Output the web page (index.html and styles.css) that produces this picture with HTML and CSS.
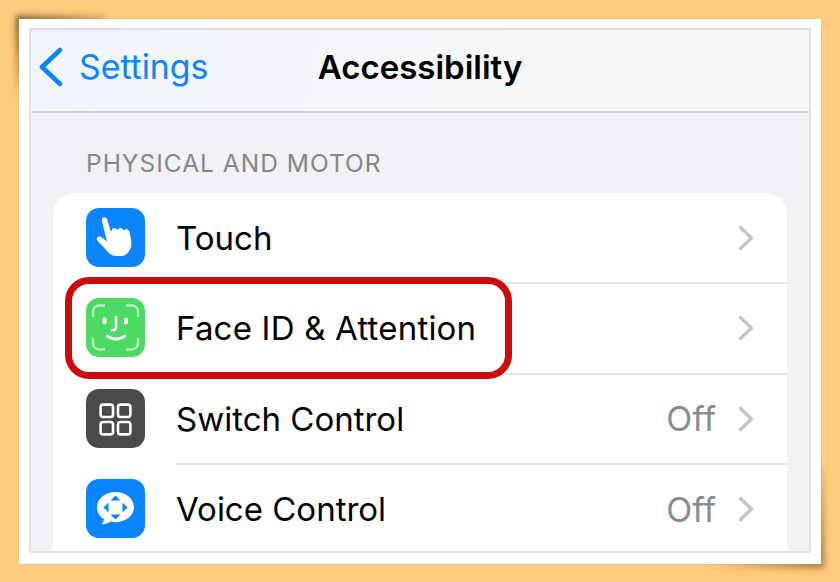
FILE: index.html
```html
<!DOCTYPE html>
<html lang="en">
<head>
<meta charset="utf-8">
<title>Accessibility</title>
<link rel="stylesheet" href="styles.css">
</head>
<body>
<main class="card">
  <div class="screen">
    <header class="nav">
      <a class="back">
        <svg class="back-icon" width="26" height="40" viewBox="0 0 26 40"><path d="M23 3 L5 20 L23 37" fill="none" stroke="#0a84ff" stroke-width="4.6" stroke-linecap="round" stroke-linejoin="round"/></svg>
        <span>Settings</span>
      </a>
      <h1 class="title">Accessibility</h1>
    </header>
    <section class="content">
      <h2 class="section-label">PHYSICAL AND MOTOR</h2>
      <ul class="list">
        <li class="row">
          <span class="icon icon-blue">
            <svg width="59" height="59" viewBox="0 0 59 59"><path d="M16 13.500C15.400 11 16.500 9.600 18 9.300 19.600 9 20.800 10 21.300 11.700L24.600 23 25.800 22.600C26 20.800 27.200 20 28.500 20 29.900 20 30.800 20.800 31.200 22L32 21.800C32.500 20.400 33.600 19.800 34.800 19.900 36.200 20 37 21 37.300 22.400L38.200 22.200C38.900 21.200 39.900 20.900 41 21.200 42.600 21.600 43.400 22.800 43.700 24.400L45.200 33C46 37 44.500 44 38.500 47.500 34 48.500 28 48.300 24.500 46.500 20 42 16 37.500 12 33.500 10.400 31.800 10.400 30 11.500 29 12.600 28 14.300 28.300 15.800 29.500L21 33.500Z" fill="#fff"/></svg>
          </span>
          <span class="label">Touch</span>
          <svg class="chev" width="16" height="26" viewBox="0 0 16 26"><path d="M2.500 2.500 L13.500 13 L2.500 23.500" fill="none" stroke="#c5c5c8" stroke-width="3.400" stroke-linecap="round" stroke-linejoin="round"/></svg>
        </li>
        <li class="row">
          <span class="icon icon-green">
            <svg width="59" height="59" viewBox="0 0 59 59"><g fill="none" stroke="#fff" stroke-linecap="round"><path d="M7 18v-4.500a6 6 0 0 1 6-6h5M41 7.500h5a6 6 0 0 1 6 6V18M52 41v4.500a6 6 0 0 1-6 6h-5M18 51.500h-5a6 6 0 0 1-6-6V41" stroke-width="2.400" opacity=".6"/><path d="M18.500 21.500v3M40 21.500v3" stroke-width="4"/><path d="M30 19v10.500c0 2-1 2.800-4 2.800" stroke-width="2.500"/><path d="M21.500 38c4.500 4 12.500 4 17 0" stroke-width="3"/></g></svg>
          </span>
          <span class="label label-wide">Face ID &amp; Attention</span>
          <svg class="chev" width="16" height="26" viewBox="0 0 16 26"><path d="M2.500 2.500 L13.500 13 L2.500 23.500" fill="none" stroke="#c5c5c8" stroke-width="3.400" stroke-linecap="round" stroke-linejoin="round"/></svg>
        </li>
        <li class="row">
          <span class="icon icon-gray">
            <svg width="59" height="59" viewBox="0 0 59 59"><g fill="none" stroke="#fff" stroke-width="2.600"><rect x="14.600" y="15.600" width="12.400" height="12.400" rx="2.500"/><rect x="32" y="15.600" width="12.400" height="12.400" rx="2.500"/><rect x="14.600" y="33" width="12.400" height="12.400" rx="2.500"/><rect x="32" y="33" width="12.400" height="12.400" rx="2.500"/></g></svg>
          </span>
          <span class="label">Switch Control</span>
          <span class="value">Off</span>
          <svg class="chev" width="16" height="26" viewBox="0 0 16 26"><path d="M2.500 2.500 L13.500 13 L2.500 23.500" fill="none" stroke="#c5c5c8" stroke-width="3.400" stroke-linecap="round" stroke-linejoin="round"/></svg>
        </li>
        <li class="row">
          <span class="icon icon-blue">
            <svg width="59" height="59" viewBox="0 0 59 59"><path d="M29.500 13C19.300 13 11 19.800 11 28.300 11 33.300 13.600 37.500 18 40.300 17.700 42.100 16.900 43.700 15.600 45.200 18.900 45.400 22.200 44.400 24.700 42.600 26.300 43 27.900 43.200 29.500 43.200 39.700 43.200 48 36.700 48 28.300 48 19.800 39.700 13 29.500 13Z" fill="#fff"/><path d="M29.500 16.500l5 5h-10zM29.500 40.500l-5-5h10zM17.500 28.500l5-5v10zM41.500 28.500l-5-5v10z" fill="#0a84ff"/></svg>
          </span>
          <span class="label">Voice Control</span>
          <span class="value">Off</span>
          <svg class="chev" width="16" height="26" viewBox="0 0 16 26"><path d="M2.500 2.500 L13.500 13 L2.500 23.500" fill="none" stroke="#c5c5c8" stroke-width="3.400" stroke-linecap="round" stroke-linejoin="round"/></svg>
        </li>
      </ul>
    </section>
    <div class="highlight"></div>
  </div>
</main>
</body>
</html>
```
FILE: styles.css
```css
* { box-sizing: border-box; }
html, body { margin: 0; height: 100%; }
body {
  width: 840px;
  height: 582px;
  padding: 19px;
  background: #ffcb7c;
  overflow: hidden;
  font-family: Inter, "Liberation Sans", sans-serif;
}
.card {
  position: relative;
  width: 802px;
  height: 545px;
  padding: 9px 10px 11px;
  background: #fff;
  box-shadow: 0 0 1px #c9a871;
}
.card::before,
.card::after {
  content: "";
  position: absolute;
  z-index: -1;
  filter: blur(3px);
}
.card::before {
  left: -3px;
  top: -3px;
  width: 90px;
  height: 130px;
  background: linear-gradient(146deg, rgba(80, 55, 20, .85) 0%, rgba(80, 55, 20, 0) 45%);
}
.card::after {
  right: -3px;
  bottom: -4px;
  width: 140px;
  height: 100px;
  background: linear-gradient(135deg, rgba(80, 55, 20, 0) 50%, rgba(80, 55, 20, .6) 100%);
}
.screen {
  position: relative;
  height: 100%;
  border: 2px solid #e2e2e6;
  border-top-color: #dcdce0;
  border-radius: 2px;
  background: #f1f1f6;
  overflow: hidden;
}
.nav {
  position: relative;
  display: flex;
  align-items: center;
  justify-content: center;
  height: 83px;
  padding-bottom: 7px;
  border-bottom: 2px solid #d4d4d8;
  background: linear-gradient(100deg, #f1f5fb 0%, #f5f6f9 40%, #f8f8f8 100%);
}
.back {
  position: absolute;
  left: 6px;
  top: 17px;
  display: flex;
  align-items: center;
  gap: 16px;
  color: #0a84ff;
  font-size: 33.800px;
  line-height: 40px;
}
.title {
  margin: 0;
  color: #000;
  font-size: 33px;
  font-weight: 600;
  line-height: 40px;
}
.content { padding: 0 22px; }
.section-label {
  height: 79.500px;
  margin: 0;
  padding: 35px 0 0 33px;
  color: #86868b;
  font-size: 24.500px;
  font-weight: 400;
  line-height: 30px;
  letter-spacing: 1px;
}
.list {
  margin: 0;
  padding: 0;
  list-style: none;
  background: #fff;
  border-radius: 22px 22px 0 0;
}
.row {
  position: relative;
  display: flex;
  align-items: center;
  height: 90.500px;
  padding: 0 33px;
}
.row + .row::before {
  content: "";
  position: absolute;
  left: 123px;
  right: 0;
  top: -1px;
  height: 2px;
  background: #e4e4e7;
}
.icon {
  flex: none;
  width: 59px;
  height: 59px;
  margin: 0 31px 1px 0;
  border-radius: 13px;
}
.icon svg { display: block; }
.icon-blue { background: #0a84ff; }
.icon-green { background: #4cd964; }
.icon-gray { background: #4a4a4a; }
.label {
  flex: 1;
  color: #000;
  font-size: 33px;
  line-height: 40px;
}
.label-wide { letter-spacing: .2px; }
.value {
  margin: 1px 22px 0 0;
  color: #8a8a8e;
  font-size: 34px;
  line-height: 40px;
}
.chev { flex: none; }
.highlight {
  position: absolute;
  left: 34px;
  top: 247px;
  width: 447px;
  height: 102px;
  border: 7px solid #cc0c0c;
  border-radius: 24px;
}
```
